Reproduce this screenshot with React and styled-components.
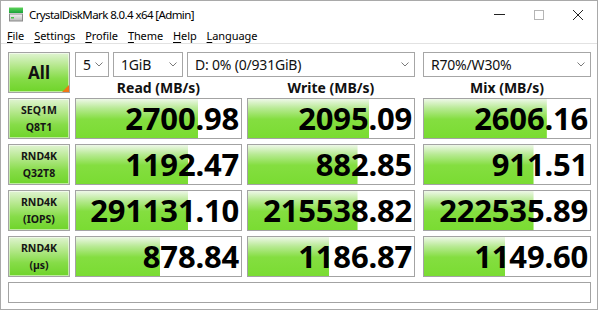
import React from 'react'
import styled, { createGlobalStyle } from 'styled-components'

const GlobalStyle = createGlobalStyle`
  html, body {
    margin: 0;
    padding: 0;
    background: #fff;
  }
  body {
    font-family: "Noto Sans", "Liberation Sans", sans-serif;
    color: #000;
  }
`;

const Window = styled.div`
  width: 598px;
  height: 310px;
  box-sizing: border-box;
  border: 1px solid #a9a9a9;
  background: #fff;
  display: flex;
  flex-direction: column;
  overflow: hidden;
`;

const TitleBar = styled.div`
  height: 27px;
  display: flex;
  align-items: center;
  padding-left: 7px;
  gap: 5px;
`;

const Title = styled.div`
  font-size: 11.5px;
  letter-spacing: -0.6px;
  flex: 1;
  white-space: nowrap;
`;

const Controls = styled.div`
  display: flex;
  height: 100%;
`;

const CtrlButton = styled.div`
  width: ${(p) => p.$w || 40}px;
  display: flex;
  align-items: center;
  justify-content: center;
`;

const MenuBar = styled.div`
  height: 15px;
  display: flex;
  align-items: center;
  gap: 10px;
  padding-left: 6px;
  border-bottom: 1px solid #e2e2e2;
  font-size: 11px;
  letter-spacing: -0.1px;
`;

const MenuItem = styled.span`
  white-space: nowrap;
  u { text-decoration: underline; text-underline-offset: 2px; }
`;

const Board = styled.div`
  display: grid;
  grid-template-columns: 62px 167px 168px 171px;
  grid-template-rows: 25px 11px repeat(4, 41px) 21px;
  column-gap: 5px;
  row-gap: 5px;
  padding: 8px 0 0 7px;
`;

const greenButton = `
  background: linear-gradient(to bottom, #e0f4d2 0%, #b6e88e 32%, #86dc48 66%, #6fd42a 100%);
  border: 1px solid #a3a3a3;
  box-shadow: inset 0 0 0 1px rgba(255, 255, 255, 0.55);
`;

const AllButton = styled.div`
  grid-column: 1;
  grid-row: 1 / 3;
  ${greenButton}
  display: flex;
  align-items: center;
  justify-content: center;
  font-size: 17px;
  font-weight: 700;
  color: #111;
  position: relative;
`;

const Corner = styled.div`
  position: absolute;
  right: 0;
  bottom: 0;
  width: 0;
  height: 0;
  border-left: 7px solid transparent;
  border-bottom: 7px solid #f07616;
`;

const SelectRow = styled.div`
  grid-column: 2 / 4;
  grid-row: 1;
  display: flex;
  gap: 4px;
`;

const Select = styled.div`
  box-sizing: border-box;
  width: ${(p) => (p.$w ? `${p.$w}px` : 'auto')};
  flex: ${(p) => (p.$w ? 'none' : 1)};
  grid-column: ${(p) => p.$col || 'auto'};
  grid-row: ${(p) => (p.$col ? 1 : 'auto')};
  margin-left: ${(p) => (p.$col === 4 ? '3px' : 0)};
  height: 25px;
  border: 1px solid #a6a6a6;
  background: #fff;
  display: flex;
  align-items: center;
  padding: 0 5px 0 7px;
  font-size: 14px;
  letter-spacing: -0.2px;
  color: #111;
  white-space: nowrap;
  span { flex: 1; }
`;

const Header = styled.div`
  grid-column: ${(p) => p.$col};
  grid-row: 2;
  margin-left: ${(p) => (p.$col === 4 ? '3px' : 0)};
  text-align: center;
  font-size: 14px;
  font-weight: 700;
  line-height: 11px;
  color: #111;
  white-space: nowrap;
`;

const Label = styled.div`
  grid-column: 1;
  ${greenButton}
  display: flex;
  flex-direction: column;
  align-items: center;
  justify-content: center;
  font-size: 10.5px;
  font-weight: 700;
  line-height: 17px;
  color: #151515;
`;

const Value = styled.div`
  grid-column: ${(p) => p.$col};
  margin-left: ${(p) => (p.$col === 4 ? '3px' : 0)};
  border: 1px solid #a3a3a3;
  background:
    linear-gradient(to bottom, #eef8e8 0%, #b8ea94 24%, #84de40 52%, #7adc32 100%)
      no-repeat left top / ${(p) => p.$fill}% 100%,
    #fff;
  display: flex;
  align-items: center;
  justify-content: flex-end;
  padding-right: 2px;
  font-size: 31px;
  font-weight: 700;
  line-height: 1;
  letter-spacing: -0.2px;
  color: #000;
`;

const Comment = styled.div`
  grid-column: 1 / -1;
  border: 1px solid #a3a3a3;
  background: #fff;
`;

const Chevron = () => (
  <svg width="8" height="5" viewBox="0 0 8 5">
    <path d="M0.5 0.5 L4 4 L7.5 0.5" fill="none" stroke="#7a7a7a" strokeWidth="1" />
  </svg>
);

const AppIcon = () => (
  <svg width="16" height="16" viewBox="0 0 16 16">
    <defs>
      <linearGradient id="g" x1="0" y1="0" x2="0" y2="1">
        <stop offset="0" stopColor="#5fd35a" />
        <stop offset="1" stopColor="#19a23a" />
      </linearGradient>
      <linearGradient id="b" x1="0" y1="0" x2="0" y2="1">
        <stop offset="0" stopColor="#f4f4f4" />
        <stop offset="1" stopColor="#b9b9b9" />
      </linearGradient>
    </defs>
    <rect x="1" y="0.5" width="14" height="5.5" fill="url(#g)" />
    <rect x="1.5" y="7" width="13" height="7" fill="url(#b)" stroke="#8a8a8a" strokeWidth="1" />
    <rect x="3" y="10" width="3" height="1.5" fill="#4cc24c" />
  </svg>
);

const rows = [
  { top: 'SEQ1M', bottom: 'Q8T1', values: [['2700.98', 74], ['2095.09', 73], ['2606.16', 74]] },
  { top: 'RND4K', bottom: 'Q32T8', values: [['1192.47', 68], ['882.85', 66], ['911.51', 66]] },
  { top: 'RND4K', bottom: '(IOPS)', values: [['291131.10', 68], ['215538.82', 66], ['222535.89', 66]] },
  { top: 'RND4K', bottom: '(µs)', values: [['878.84', 51], ['1186.87', 49], ['1149.60', 49]] },
];

const menus = [
  ['F', 'ile'],
  ['S', 'ettings'],
  ['P', 'rofile'],
  ['T', 'heme'],
  ['H', 'elp'],
  ['L', 'anguage'],
];

const App = () => {
  return (
    <>
      <GlobalStyle />
      <Window>
        <TitleBar>
          <AppIcon />
          <Title>CrystalDiskMark 8.0.4 x64 [Admin]</Title>
          <Controls>
            <CtrlButton>
              <svg width="11" height="2" viewBox="0 0 11 2">
                <line x1="0" y1="0.5" x2="11" y2="0.5" stroke="#222" strokeWidth="1" />
              </svg>
            </CtrlButton>
            <CtrlButton>
              <svg width="10" height="10" viewBox="0 0 10 10">
                <rect x="0.5" y="0.5" width="9" height="9" fill="none" stroke="#b5b5b5" strokeWidth="1" />
              </svg>
            </CtrlButton>
            <CtrlButton $w={38}>
              <svg width="10" height="10" viewBox="0 0 10 10">
                <path d="M0 0 L10 10 M10 0 L0 10" stroke="#222" strokeWidth="1" />
              </svg>
            </CtrlButton>
          </Controls>
        </TitleBar>
        <MenuBar>
          {menus.map(([k, rest]) => (
            <MenuItem key={k}>
              <u>{k}</u>
              {rest}
            </MenuItem>
          ))}
        </MenuBar>
        <Board>
          <AllButton>
            All
            <Corner />
          </AllButton>
          <SelectRow>
            <Select $w={34}>
              <span>5</span>
              <Chevron />
            </Select>
            <Select $w={70}>
              <span>1GiB</span>
              <Chevron />
            </Select>
            <Select>
              <span>D: 0% (0/931GiB)</span>
              <Chevron />
            </Select>
          </SelectRow>
          <Select $col={4}>
            <span>R70%/W30%</span>
            <Chevron />
          </Select>
          <Header $col={2}>Read (MB/s)</Header>
          <Header $col={3}>Write (MB/s)</Header>
          <Header $col={4}>Mix (MB/s)</Header>
          {rows.map((r, i) => (
            <React.Fragment key={i}>
              <Label>
                <div>{r.top}</div>
                <div>{r.bottom}</div>
              </Label>
              {r.values.map(([v, fill], j) => (
                <Value key={j} $col={j + 2} $fill={fill}>
                  {v}
                </Value>
              ))}
            </React.Fragment>
          ))}
          <Comment />
        </Board>
      </Window>
    </>
  )
}

export default App
